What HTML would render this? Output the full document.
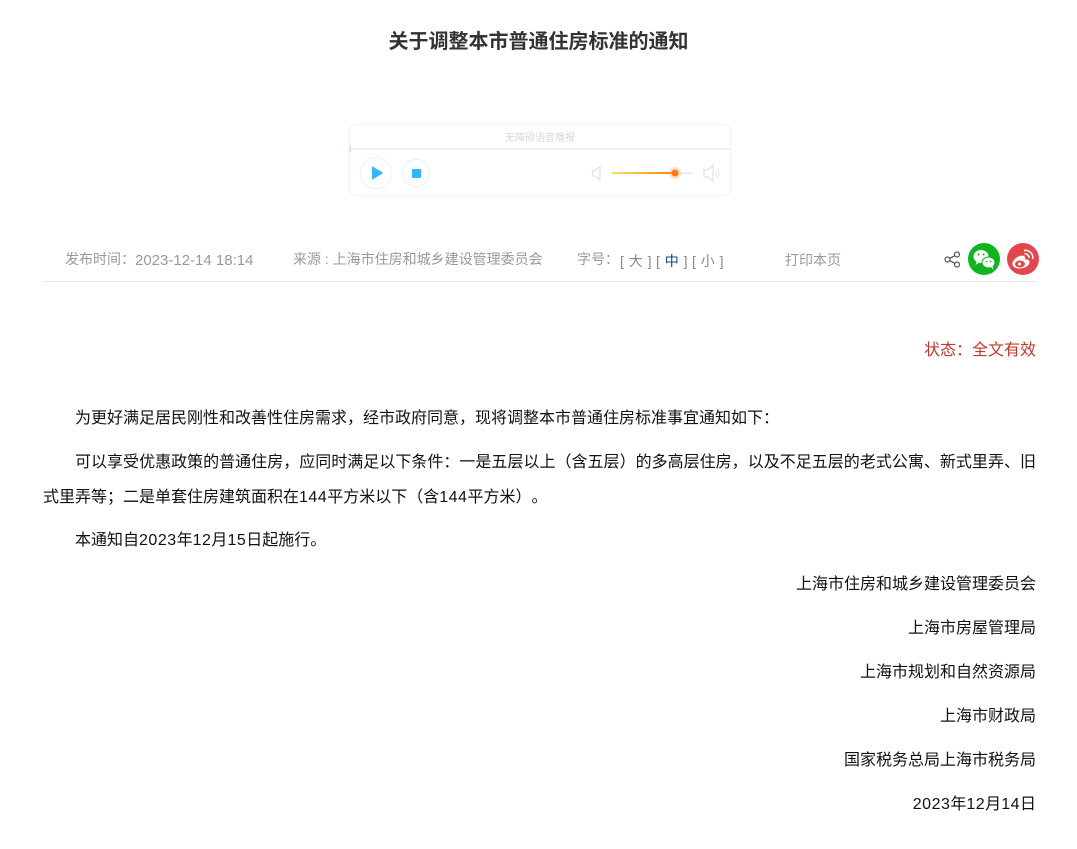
<!DOCTYPE html>
<html lang="zh-CN"><head><meta charset="utf-8"><title>关于调整本市普通住房标准的通知</title>
<style>
html,body{margin:0;padding:0;background:#fff;width:1077px;height:849px;overflow:hidden}
body{position:relative;font-family:"Liberation Sans","Noto Sans CJK SC",sans-serif;color:#111;text-spacing-trim:space-all}
.t{position:absolute;white-space:nowrap}
.p{font-size:16px;line-height:24px;color:#111}
.r{right:41px;text-align:right}
.m{font-size:14px;line-height:20px;color:#999}
.n{letter-spacing:.5px}
svg{position:absolute;overflow:visible}
</style></head><body>
<div class="t" style="left:0;width:1077px;top:28px;text-align:center;font-size:20px;line-height:28px;font-weight:bold;color:#333">关于调整本市普通住房标准的通知</div>

<div style="position:absolute;left:349px;top:124px;width:380px;height:70px;border:1px solid #f2f4f8;border-radius:8px;box-shadow:0 0 2px rgba(225,232,245,.35)"></div>
<div style="position:absolute;left:350px;top:148px;width:380px;height:2px;background:#edf1f8"></div>
<div style="position:absolute;left:349px;top:145px;width:2px;height:7px;background:#cfe9fb"></div>
<div class="t" style="left:350px;width:380px;top:132px;text-align:center;font-size:10px;line-height:14px;color:#d4d7e6">无障碍语音播报</div>
<svg style="left:0;top:0" width="1077" height="849">
<circle cx="376" cy="173" r="15.500" fill="#fff" stroke="#edf1f8"/>
<path d="M372.500 167L382.500 173L372.500 179Z" fill="#2fb9fb" stroke="#2fb9fb" stroke-width="1" stroke-linejoin="round"/>
<circle cx="416" cy="173" r="13.500" fill="#fff" stroke="#e8f0fa"/>
<rect x="412" y="169" width="9" height="9" rx="1" fill="#2fb9fb"/>
<path d="M592.500 170.500H595L600 166.500V180L595 176H592.500Z" fill="none" stroke="#dfe1e5" stroke-width="1.200"/>
<defs><linearGradient id="g" x1="0" x2="1"><stop offset="0" stop-color="#f8e45c"/><stop offset=".5" stop-color="#fbb232"/><stop offset="1" stop-color="#f97d0c"/></linearGradient></defs>
<rect x="612" y="172.500" width="81" height="1.500" fill="#e4e6ea"/>
<rect x="612" y="172" width="63" height="2" fill="url(#g)"/>
<circle cx="675" cy="173" r="6" fill="#fbb27a" opacity=".4"/>
<circle cx="675" cy="173" r="3.500" fill="#f97d0c"/>
<path d="M704 170H707L713 165.500V181L707 176.500H704Z" fill="none" stroke="#dfe1e5" stroke-width="1.200"/>
<path d="M715.500 170.500Q717.500 173 715.500 176M717.500 168.500Q720.500 173 717.500 178" fill="none" stroke="#dfe1e5" stroke-width="1"/>

<g fill="none" stroke="#555" stroke-width="1.200">
<circle cx="947.500" cy="259.500" r="2.500"/><circle cx="957" cy="254.500" r="2.500"/><circle cx="957" cy="264.500" r="2.500"/>
<path d="M949.800 258.300L954.700 255.700M949.800 260.700L954.700 263.300"/>
</g>
<circle cx="984" cy="259" r="16" fill="#0fb41f"/>
<ellipse cx="981" cy="256.500" rx="7.500" ry="6.500" fill="#fff"/>
<path d="M977 261L975.500 265L980 262Z" fill="#fff"/>
<ellipse cx="988.500" cy="262.500" rx="6.500" ry="5.500" fill="#fff" stroke="#0fb41f"/>
<path d="M991 267L993.500 270L992.500 266Z" fill="#fff"/>
<circle cx="978.500" cy="254.500" r="1" fill="#0fb41f"/><circle cx="983.500" cy="254.500" r="1" fill="#0fb41f"/>
<circle cx="986.500" cy="261.500" r=".8" fill="#0fb41f"/><circle cx="990.500" cy="261.500" r=".8" fill="#0fb41f"/>

<circle cx="1023" cy="259" r="16" fill="#e2474d"/>
<path d="M1020 256C1014 258 1011 263 1013 266C1016 270 1026 269 1029 264C1031 260 1027 259 1025 259.500C1026 256 1023 255 1020 256Z" fill="#fff"/>
<ellipse cx="1020" cy="264" rx="5" ry="3.500" fill="#e2474d"/>
<circle cx="1019.500" cy="264" r="1.500" fill="#fff"/>
<path d="M1024 250.500C1029 249.500 1034 254 1032.500 259M1024.500 254C1027 253.500 1029.500 256 1028.800 258" fill="none" stroke="#fff" stroke-width="1.500"/>
</svg>

<div class="t m" style="left:65px;top:249px">发布时间：</div>
<div class="t m" style="left:135px;top:251px;font-size:15px">2023-12-14 18:14</div>
<div class="t m" style="left:293px;top:249px">来源 : 上海市住房和城乡建设管理委员会</div>
<div class="t m" style="left:577px;top:249px">字号：</div>
<div class="t m" style="left:620px;top:251px;color:#888;word-spacing:1px">[ 大 ]</div>
<div class="t m" style="left:656px;top:251px;color:#888;word-spacing:1px">[ <span style="color:#0b4a8f">中</span> ]</div>
<div class="t m" style="left:692px;top:251px;color:#888;word-spacing:1px">[ 小 ]</div>
<div class="t m" style="left:785px;top:250px">打印本页</div>
<div style="position:absolute;left:43px;top:281px;width:994px;height:1px;background:#e6e6e6"></div>

<div class="t r" style="top:339px;font-size:16px;line-height:24px;color:#c0392b">状态：全文有效</div>

<div class="t p" style="left:75px;top:407px">为更好满足居民刚性和改善性住房需求，经市政府同意，现将调整本市普通住房标准事宜通知如下：</div>
<div class="t p" style="left:75px;top:451px;width:961px;white-space:normal;text-align:justify;text-align-last:justify">可以享受优惠政策的普通住房，应同时满足以下条件：一是五层以上（含五层）的多高层住房，以及不足五层的老式公寓、新式里弄、旧</div>
<div class="t p" style="left:43px;top:486px">式里弄等；二是单套住房建筑面积在<span class="n">144</span>平方米以下（含<span class="n">144</span>平方米）。</div>
<div class="t p" style="left:75px;top:529px">本通知自<span class="n">2023</span>年<span class="n">12</span>月<span class="n">15</span>日起施行。</div>
<div class="t p r" style="top:573px">上海市住房和城乡建设管理委员会</div>
<div class="t p r" style="top:617px">上海市房屋管理局</div>
<div class="t p r" style="top:661px">上海市规划和自然资源局</div>
<div class="t p r" style="top:705px">上海市财政局</div>
<div class="t p r" style="top:749px">国家税务总局上海市税务局</div>
<div class="t p r" style="top:793px"><span class="n">2023</span>年<span class="n">12</span>月<span class="n">14</span>日</div>
</body></html>
